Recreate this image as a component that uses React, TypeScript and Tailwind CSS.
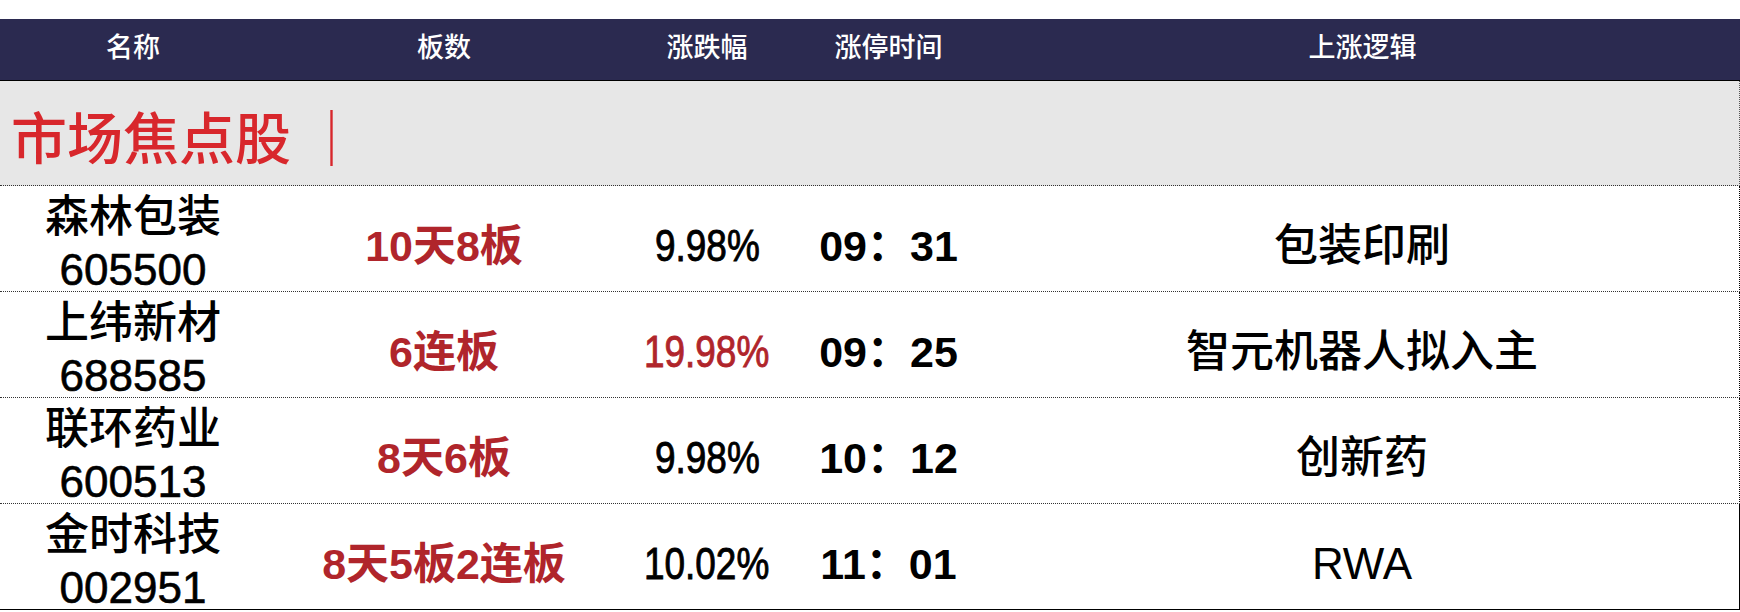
import React from 'react';

const cols = 'grid grid-cols-[266px_356px_170px_193px_1fr]';

const rows = [
  { name: '森林包装', code: '605500', boards: '10天8板', pct: '9.98%', pctRed: false, time: '09：31', logic: '包装印刷' },
  { name: '上纬新材', code: '688585', boards: '6连板', pct: '19.98%', pctRed: true, time: '09：25', logic: '智元机器人拟入主' },
  { name: '联环药业', code: '600513', boards: '8天6板', pct: '9.98%', pctRed: false, time: '10：12', logic: '创新药' },
  { name: '金时科技', code: '002951', boards: '8天5板2连板', pct: '10.02%', pctRed: false, time: '11：01', logic: 'RWA' },
];

export default function App() {
  return (
    <div className="w-[1740px] h-[612px] bg-white font-['Liberation_Sans','Noto_Sans_CJK_SC',sans-serif] text-black">
      <div className="h-[19px]" />

      {/* header */}
      <div className={`${cols} h-[62px] bg-[#2b2a50] border-b border-black text-white text-[27px] font-medium`}>
        {['名称', '板数', '涨跌幅', '涨停时间', '上涨逻辑'].map((h) => (
          <div key={h} className="flex items-center justify-center pb-[2px]">
            {h}
          </div>
        ))}
      </div>

      {/* section title */}
      <div className="h-[105px] bg-[#e7e7e7] border-b border-dotted border-[#333] border-r border-r-[#555] flex items-center pl-[11px] pt-[4px]">
        <span className="text-[56px] leading-none text-[#d8272c] font-medium font-['Noto_Sans_CJK_SC',serif]">
          市场焦点股 <span className="font-normal font-['Noto_Sans_CJK_SC',sans-serif]">｜</span>
        </span>
      </div>

      {rows.map((r, i) => (
        <div
          key={r.code}
          className={`${cols} h-[106px] border-r border-r-black ${
            i === rows.length - 1 ? 'border-b border-black' : 'border-b border-dotted border-[#333]'
          }`}
        >
          <div className="flex flex-col items-center pt-[4px] text-[44px] leading-[53px] font-medium">
            <span>{r.name}</span>
            <span className="font-normal [-webkit-text-stroke:0.6px_#000]">{r.code}</span>
          </div>
          <div className="flex items-center justify-center pt-[10px] text-[43px] font-bold text-[#b0252b]">
            {r.boards}
          </div>
          <div className="flex items-center justify-center pt-[10px] text-[44px]">
            <span
              className={`inline-block scale-x-[0.84] ${
                r.pctRed ? 'text-[#b0252b] [-webkit-text-stroke:0.9px_#b0252b]' : '[-webkit-text-stroke:0.9px_#000]'
              }`}
            >
              {r.pct}
            </span>
          </div>
          <div className="flex items-center justify-center pt-[10px] text-[43px] font-bold">
            {r.time}
          </div>
          <div className="flex items-center justify-center pt-[10px] text-[44px] font-medium">
            {r.logic}
          </div>
        </div>
      ))}
    </div>
  );
}
